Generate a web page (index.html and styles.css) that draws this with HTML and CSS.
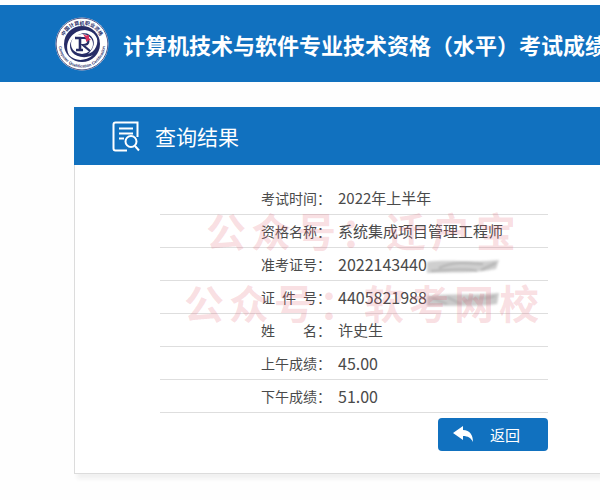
FILE: index.html
```html
<!DOCTYPE html>
<html lang="zh-CN">
  <head>
    <meta charset="UTF-8" />
    <meta name="viewport" content="width=device-width, initial-scale=1.0" />
    <title>查询结果</title>
    <link rel="stylesheet" href="styles.css">
  </head>
  <body>
    <header class="header">
      <svg class="logo" viewBox="0 0 54 54" aria-hidden="true">
        <defs>
          <path id="arc-top" d="M7.500 27 A19.500 19.500 0 0 1 46.500 27" />
          <path id="arc-bottom" d="M5 20 A23.200 23.200 0 1 0 49 20" />
        </defs>
        <circle cx="27" cy="27" r="26.500" fill="#fff" />
        <circle cx="27" cy="27" r="25.900" fill="none" stroke="#29306b" stroke-width="0.800" />
        <circle cx="27" cy="27" r="18" fill="#262c66" />
        <path d="M14 38 C8 25 18 13 30 13 C40 14 45 22 41 30 C39 34 36 36 33 37 C38 32 40 27 38 22 C35 16 29 15 23 18 C15 22 13 29 17 35 C21 40 30 42 38 38 C30 45 19 44 14 38Z" fill="#fff" />
        <ellipse cx="27" cy="27" rx="11" ry="10" fill="#fff" />
        <path d="M20 21 H25 V33 M21 33 H28" fill="none" stroke="#262c66" stroke-width="2.600" />
        <path d="M25 21 H29 C35 21 35 28 28 28 L35 34" fill="none" stroke="#262c66" stroke-width="2.200" />
        <path d="M28 17 L31 18.500 L34 18 L34 21 L36 23 L33 23.500 L31 25 L31 22Z" fill="#d9305c" />
        <text class="logo-cn"><textPath href="#arc-top" startOffset="50%" text-anchor="middle">中国计算机职业资格</textPath></text>
        <text class="logo-en"><textPath href="#arc-bottom" startOffset="50%" text-anchor="middle">Computer Qualification Certification</textPath></text>
      </svg>
      <h1>计算机技术与软件专业技术资格（水平）考试成绩</h1>
    </header>

    <main class="card">
      <div class="card-head">
        <svg class="icon-search" viewBox="0 0 28 31" aria-hidden="true">
          <path d="M15 29.500 H3.500 Q1.500 29.500 1.500 27.500 V3.500 Q1.500 1.500 3.500 1.500 H25.500 V16" />
          <path d="M7 7.500 H21 M7 12.500 H21 M7 17.500 H12" />
          <circle cx="19" cy="20.500" r="5.500" />
          <path d="M23 25 L27 29.500" />
        </svg>
        <h2>查询结果</h2>
      </div>

      <div class="card-body">
        <table class="result">
          <tr>
            <th scope="row"><span>考试时间</span>：</th>
            <td>2022年上半年</td>
          </tr>
          <tr>
            <th scope="row"><span>资格名称</span>：</th>
            <td>系统集成项目管理工程师</td>
          </tr>
          <tr>
            <th scope="row"><span>准考证号</span>：</th>
            <td class="num">2022143440<svg class="smear" viewBox="0 0 74 16" aria-hidden="true">
              <path d="M0 3 C20 0 45 4 72 1 L69 10 C48 15 22 13 0 14Z" fill="#cfcfcf" />
              <path d="M12 9 C28 2 42 4 56 5 M4 12 C22 11 36 9 50 12" fill="none" stroke="#b4b4b4" stroke-width="2" />
              <path d="M54 11 L69 4" stroke="#b8b8b8" stroke-width="3" />
            </svg></td>
          </tr>
          <tr>
            <th scope="row"><span>证 件 号</span>：</th>
            <td class="num">4405821988<svg class="smear" viewBox="0 0 74 16" aria-hidden="true">
              <path d="M0 4 C22 1 48 4 72 1 L70 12 C50 15 24 13 0 14Z" fill="#cacaca" />
              <path d="M5 6 L20 12 M20 5 L34 12 M36 10 C48 3 58 9 68 4" fill="none" stroke="#b6b6b6" stroke-width="2" />
            </svg></td>
          </tr>
          <tr>
            <th scope="row"><span>姓 名</span>：</th>
            <td>许史生</td>
          </tr>
          <tr>
            <th scope="row"><span>上午成绩</span>：</th>
            <td class="num">45.00</td>
          </tr>
          <tr>
            <th scope="row"><span>下午成绩</span>：</th>
            <td class="num">51.00</td>
          </tr>
        </table>

        <div class="actions">
          <button type="button" class="back">
            <svg viewBox="0 0 21 17" aria-hidden="true">
              <path d="M0 7 L10 0 V4 C17 4 20 9 20 16 C18 12 15 10 10 10 V14Z" fill="#fff" />
            </svg>
            返回
          </button>
        </div>

        <div class="watermark watermark-first">
          <span>公</span><span>众</span><span>号</span><span>：</span><span>迁</span><span>户</span><span>宝</span>
        </div>
        <div class="watermark watermark-second">
          <span>公</span><span>众</span><span>号</span><span>：</span><span>软</span><span>考</span><span>网</span><span>校</span>
        </div>
      </div>
    </main>
  </body>
</html>
```
FILE: styles.css
```css
* {
  box-sizing: border-box;
}
body {
  margin: 0;
  padding: 5px 0 20px;
  background: #fefefe;
  color: #4a4a4a;
  font-family: "Noto Sans CJK SC", sans-serif;
  overflow-x: hidden;
}
h1,
h2 {
  margin: 0;
  color: #fff;
  white-space: nowrap;
}
.header {
  display: flex;
  align-items: center;
  gap: 14px;
  height: 77px;
  padding-left: 55px;
  background: #1171bf;
  overflow: hidden;
}
.header h1 {
  font-size: 22px;
  line-height: 32px;
}
.logo {
  width: 54px;
  height: 54px;
  flex: none;
}
.logo-cn {
  font-size: 5px;
  font-weight: bold;
  fill: #29306b;
}
.logo-en {
  font-family: "Liberation Sans", sans-serif;
  font-size: 4px;
  font-weight: bold;
  fill: #29306b;
}
.card {
  margin: 25px 0 0 74px;
  border-left: 1px solid #dcdcdc;
  border-bottom: 1px solid #dcdcdc;
  background: #fff;
  box-shadow: 3px 5px 4px #f1f1f1;
}
.card-head {
  display: flex;
  align-items: center;
  gap: 15px;
  height: 58px;
  margin-left: -1px;
  padding-left: 38px;
  background: #1171bf;
}
.card-head h2 {
  font-size: 21px;
  font-weight: normal;
  line-height: 30px;
}
.icon-search {
  width: 28px;
  height: 31px;
  fill: none;
  stroke: #fff;
  stroke-width: 2;
}
.card-body {
  position: relative;
  padding: 17px 52px 22px 85px;
}
.result {
  width: 100%;
  table-layout: fixed;
  border-collapse: separate;
  border-spacing: 0;
}
.result th,
.result td {
  height: 33px;
  padding: 0;
  border-bottom: 1px solid #dedede;
  line-height: 24px;
  white-space: nowrap;
}
.result th {
  width: 178px;
  padding-right: 7px;
  font-size: 14px;
  font-weight: normal;
  text-align: right;
}
.result th span {
  display: inline-block;
  width: 56px;
  text-align-last: justify;
}
.result td {
  font-size: 15px;
}
.result .num {
  font-size: 16px;
}
.smear {
  width: 74px;
  height: 16px;
  vertical-align: middle;
  filter: blur(1px);
}
.actions {
  display: flex;
  justify-content: flex-end;
  margin-top: 5px;
}
.back {
  display: flex;
  align-items: center;
  gap: 16px;
  width: 110px;
  height: 33px;
  padding: 0 0 0 15px;
  border: 0;
  border-radius: 4px;
  background: #1171bf;
  color: #fff;
  font-family: inherit;
  font-size: 15px;
}
.back svg {
  width: 21px;
  height: 17px;
}
/* text stamped over the table */
.watermark {
  position: absolute;
  display: flex;
  gap: 5px;
  color: rgba(226, 90, 110, 0.2);
  font-size: 40px;
  font-weight: bold;
  line-height: 50px;
  pointer-events: none;
}
.watermark-first {
  top: 40px;
  left: 131px;
}
.watermark-second {
  top: 112px;
  left: 109px;
}
```
